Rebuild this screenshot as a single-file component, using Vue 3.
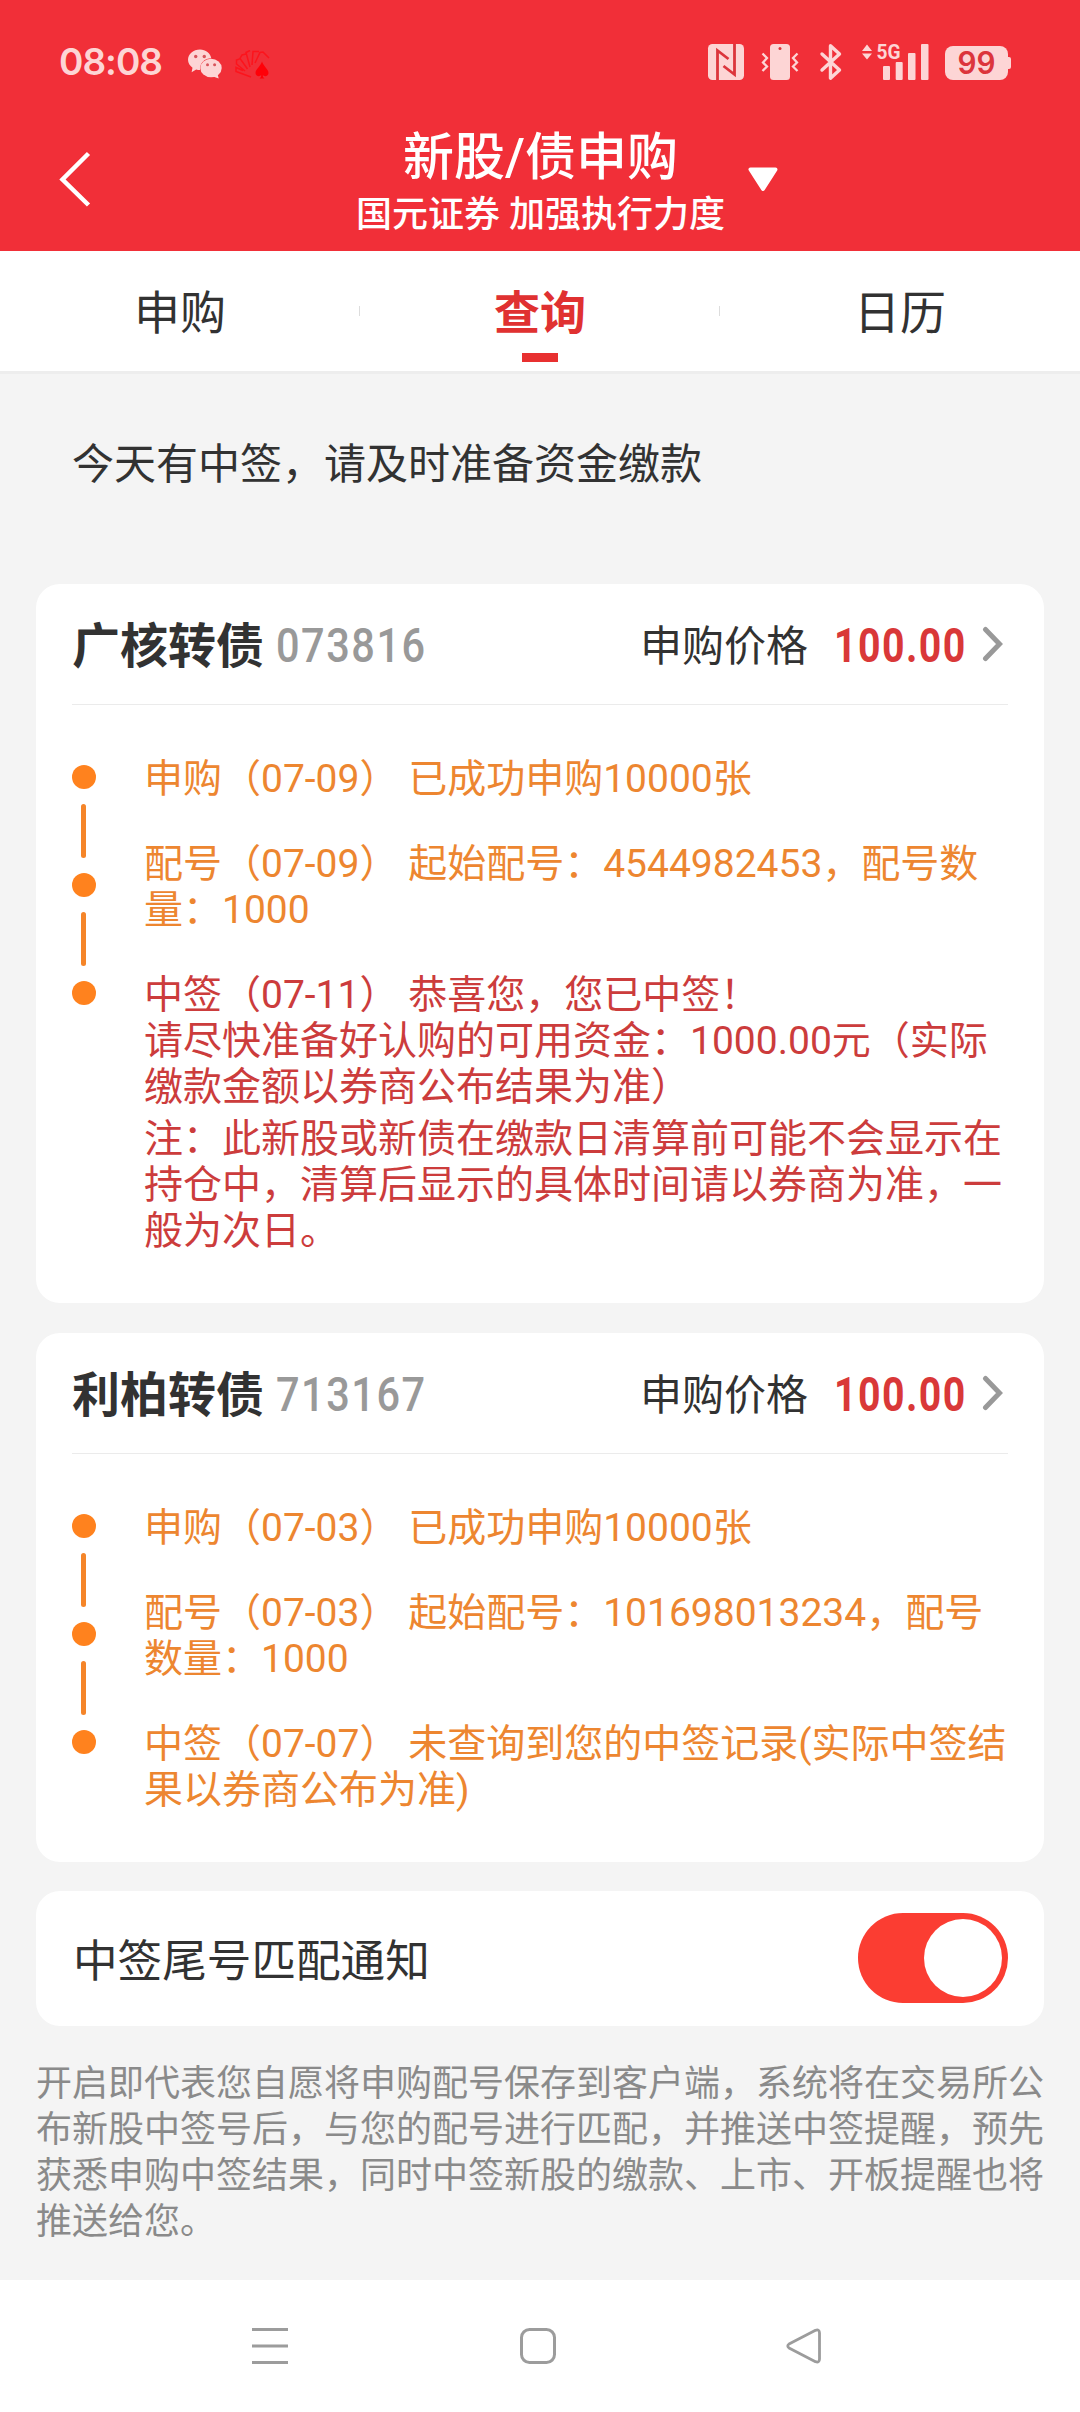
<script setup>
const tabs = [
  { label: '申购', active: false },
  { label: '查询', active: true },
  { label: '日历', active: false }
]

const bonds = [
  {
    name: '广核转债',
    code: '073816',
    price: '100.00',
    steps: [
      { text: '申购（07-09） 已成功申购10000张' },
      { text: '配号（07-09） 起始配号：4544982453，配号数\n量：1000' },
      {
        win: true,
        text: '中签（07-11） 恭喜您，您已中签！\n请尽快准备好认购的可用资金：1000.00元（实际\n缴款金额以券商公布结果为准）',
        note: '注：此新股或新债在缴款日清算前可能不会显示在\n持仓中，清算后显示的具体时间请以券商为准，一\n般为次日。'
      }
    ]
  },
  {
    name: '利柏转债',
    code: '713167',
    price: '100.00',
    steps: [
      { text: '申购（07-03） 已成功申购10000张' },
      { text: '配号（07-03） 起始配号：101698013234，配号\n数量：1000' },
      { text: '中签（07-07） 未查询到您的中签记录(实际中签结\n果以券商公布为准)' }
    ]
  }
]
</script>

<template>
  <div class="screen">
    <header class="header">
      <div class="status">
        <span class="clock">08:08</span>
        <svg class="wechat" width="34" height="30" viewBox="0 0 34 30">
          <path fill="#fdd5d5" d="M12 .5C5.4.5 0 5 0 10.800c0 3.300 1.800 6 4.500 7.900L3.600 23.200l4.600-2.600c1.300.4 2.300.5 3.800.5C11.300 14 17 9.300 23.300 9.300 22.500 4 17.600.5 12 .5z" />
          <ellipse cx="23" cy="19" rx="10.700" ry="9.300" fill="#fdd5d5" />
          <path fill="#fdd5d5" d="M25 27.500l5.700 2-1.200-4.800z" />
          <g fill="#d8545b">
            <circle cx="7.700" cy="7.500" r="1.700" /><circle cx="16.300" cy="7.500" r="1.700" />
            <circle cx="19.500" cy="15.800" r="1.500" /><circle cx="26.600" cy="15.800" r="1.500" />
          </g>
        </svg>
        <svg class="cards" width="36" height="30" viewBox="0 0 36 30">
          <g fill="none" stroke="#fc141c" stroke-width="1.500">
            <path d="M16 27L1 21.500v-4l7 3M10 21L1.500 14V10l3-1M12.500 19L5 8.500 7 5l4-1M15 17L11 2.500l4-2M17 15L18 1.500h6M20 13l5-10.500 3-.5 6 6" />
          </g>
          <path fill="#ff0008" d="M27 11.500c1.500 5 6.500 7.500 6.500 11.500 0 3-3.500 4-5.700 2.300l.2 1.700 1.500 1.500h-5l1.500-1.500.2-1.700c-2.200 1.700-5.700.7-5.700-2.300C20.500 19 25.500 16.500 27 11.500z" />
        </svg>
        <svg class="status-icons" width="310" height="44" viewBox="706 40 310 44">
          <g fill="#fdd5d5">
            <rect x="708" y="44" width="36" height="36" rx="4.500" />
            <rect x="770" y="44" width="20" height="36" rx="3.500" />
            <path d="M862 51h10l-5-6.500zM862 53.500h10l-5 6z" />
            <rect x="883" y="66" width="7" height="14" rx="1" />
            <rect x="895.700" y="62" width="7" height="18" rx="1" />
            <rect x="908" y="53" width="7.500" height="27" rx="1" />
            <rect x="921" y="44" width="7.500" height="36" rx="1" />
            <rect x="945" y="46" width="63" height="34" rx="8" />
            <path d="M1007 57h2a2 2 0 0 1 2 2v8a2 2 0 0 1-2 2h-2z" />
          </g>
          <g fill="none" stroke="#dc353c" stroke-width="2.800">
            <path d="M717.500 80V50.500l11 8.500M734.500 44v30.500L723.500 66" />
          </g>
          <circle cx="780" cy="48.500" r="1.500" fill="#dc353c" />
          <g fill="none" stroke="#fdd5d5">
            <path stroke-width="2.300" d="M762.500 53.500l4.500 4.500-4 4.500 4 4-4.500 4.500M797.500 53.500l-4.500 4.500 4 4.500-4 4 4.500 4.500" />
            <path stroke-width="3.400" stroke-linejoin="round" stroke-linecap="round" d="M822 54l17.500 16-9 8.200V45.800l9 8.200-17.500 16" />
          </g>
          <text x="876.500" y="59" class="net" textLength="24" lengthAdjust="spacingAndGlyphs">5G</text>
          <text x="976.500" y="74.300" class="level" text-anchor="middle" textLength="38" lengthAdjust="spacingAndGlyphs">99</text>
        </svg>
      </div>
      <div class="titlebar">
        <svg class="back" width="34" height="58" viewBox="0 0 34 58"><path d="M30.500 3.500L4.500 29.500l26 25.500" fill="none" stroke="#fff" stroke-width="4.500" /></svg>
        <div class="titles">
          <h1>新股/债申购</h1>
          <p>国元证券 加强执行力度</p>
        </div>
        <svg class="caret" width="30" height="25" viewBox="0 0 30 25"><path d="M2.500 2.500h25L15 22z" fill="#fff" stroke="#fff" stroke-width="4" stroke-linejoin="round" /></svg>
      </div>
    </header>

    <nav class="tabs">
      <div v-for="t in tabs" :key="t.label" class="tab" :class="{ active: t.active }">
        <span>{{ t.label }}</span>
      </div>
    </nav>

    <main class="content">
      <p class="notice">今天有中签，请及时准备资金缴款</p>

      <section v-for="b in bonds" :key="b.code" class="card">
        <div class="card-head">
          <strong class="name">{{ b.name }}</strong>
          <span class="code"><span class="narrow">{{ b.code }}</span></span>
          <span class="price-label">申购价格</span>
          <span class="price"><span class="narrow">{{ b.price }}</span></span>
          <svg class="chev" width="22" height="38" viewBox="0 0 22 38"><path d="M3.500 4.500L17.500 19l-14 14.500" fill="none" stroke="#999" stroke-width="5" stroke-linecap="round" /></svg>
        </div>
        <div class="card-body">
          <div class="rail">
            <i class="dot"></i><i class="bar"></i><i class="dot"></i><i class="bar"></i><i class="dot"></i>
          </div>
          <div class="steps">
            <div v-for="s in b.steps" :key="s.text" class="step" :class="{ win: s.win }">
              <p>{{ s.text }}</p>
              <p v-if="s.note" class="note">{{ s.note }}</p>
            </div>
          </div>
        </div>
      </section>

      <section class="card toggle">
        <span>中签尾号匹配通知</span>
        <div class="switch"><i></i></div>
      </section>

      <p class="footnote">开启即代表您自愿将申购配号保存到客户端，系统将在交易所公<br>布新股中签号后，与您的配号进行匹配，并推送中签提醒，预先<br>获悉申购中签结果，同时中签新股的缴款、上市、开板提醒也将<br>推送给您。</p>
    </main>

    <footer class="navbar">
      <svg width="36" height="36" viewBox="0 0 36 36"><path d="M0 1.500h36M0 18h36M0 34.500h36" stroke="#9c9c9c" stroke-width="3" /></svg>
      <svg class="home" width="36" height="36" viewBox="0 0 36 36"><rect x="1.500" y="1.500" width="33" height="33" rx="8" fill="none" stroke="#9c9c9c" stroke-width="3" /></svg>
      <svg width="36" height="36" viewBox="0 0 36 36"><path d="M3 16L29.500 2.300Q33.500 1 33.500 5v26q0 4-4 2.700L3 20Q.5 18 3 16z" fill="none" stroke="#9c9c9c" stroke-width="2.800" stroke-linejoin="round" /></svg>
    </footer>
  </div>
</template>

<style>
body {
  margin: 0;
  background: #f4f4f4;
}
</style>

<style scoped>
.screen {
  width: 1080px;
  height: 2412px;
  display: flex;
  flex-direction: column;
  overflow: hidden;
  background: #f4f4f4;
  color: #323232;
  font-family: Roboto, "Noto Sans CJK SC", sans-serif;
  text-spacing-trim: space-all;
}
p, h1 {
  margin: 0;
}
svg {
  display: block;
  flex: none;
}
.header {
  height: 251px;
  flex: none;
  background: #f12f38;
  color: #fff;
}
.status {
  height: 124px;
  display: flex;
  align-items: center;
  padding-left: 59px;
}
.clock {
  width: 129px;
  font: 600 37px/44px Inter, sans-serif;
  letter-spacing: -1px;
  color: #fdd5d5;
}
.wechat {
  margin-top: 3px;
}
.cards {
  margin: 5px 0 0 13px;
}
.status-icons {
  margin-left: auto;
  margin-right: 64px;
}
.net {
  font: 700 21px Roboto, sans-serif;
  fill: #fdd5d5;
}
.level {
  font: 600 31px Inter, sans-serif;
  fill: #dc353c;
}
.titlebar {
  height: 127px;
  display: grid;
  grid-template-columns: 355px 371px 1fr;
  align-items: start;
}
.back {
  margin: 26px 0 0 58px;
}
.titles {
  padding-top: 2px;
  text-align: center;
  white-space: nowrap;
}
h1 {
  font-size: 51px;
  line-height: 64px;
  font-weight: 500;
}
.titles p {
  font-size: 36px;
  line-height: 51px;
  font-weight: 500;
}
.caret {
  margin: 43px 0 0 22px;
}
.tabs {
  height: 120px;
  flex: none;
  display: flex;
  background: #fff;
  border-bottom: 3px solid #ededed;
}
.tab {
  flex: 1;
  position: relative;
  text-align: center;
  font-size: 46px;
  line-height: 125px;
}
.tab + .tab::before {
  content: "";
  position: absolute;
  left: -1px;
  top: 55px;
  width: 1px;
  height: 10px;
  background: #ddd;
}
.tab.active {
  color: #e03131;
  font-weight: 700;
}
.tab.active::after {
  content: "";
  position: absolute;
  left: 162px;
  top: 102px;
  width: 36px;
  height: 9px;
  background: #e83030;
}
.content {
  flex: 1;
  padding: 0 36px;
}
.notice {
  height: 210px;
  padding-left: 36px;
  font-size: 42px;
  line-height: 181px;
}
.card {
  background: #fff;
  border-radius: 24px;
  margin-bottom: 30px;
  padding: 0 36px;
}
.card-head {
  height: 120px;
  display: flex;
  align-items: center;
  border-bottom: 1px solid #ebebeb;
  white-space: nowrap;
}
.name {
  margin-top: 5px;
  font-size: 48px;
  line-height: 70px;
}
.code, .price {
  margin-top: 3px;
  font-size: 48.500px;
  line-height: 60px;
}
.code {
  width: 170px;
  margin-left: 12px;
  color: #999;
  font-weight: 500;
}
.narrow {
  display: inline-block;
  transform: scaleX(0.855);
  transform-origin: left;
  letter-spacing: 1.800px;
}
.price-label {
  margin-left: auto;
  margin-bottom: 3px;
  font-size: 42px;
}
.price {
  width: 148px;
  margin-left: 26px;
  color: #d93838;
  font-weight: 700;
}
.price .narrow {
  transform: scaleX(0.81);
}
.chev {
  margin-right: 4px;
}
.card-body {
  display: flex;
  padding: 51px 0 49px;
}
.rail {
  width: 72px;
  flex: none;
  padding-top: 9px;
}
.rail i {
  display: block;
}
.dot {
  width: 24px;
  height: 24px;
  border-radius: 50%;
  background: #ff821e;
}
.bar {
  width: 5px;
  height: 54px;
  margin: 15px 0 15px 9px;
  border-radius: 2.500px;
  background: #f58529;
}
.steps {
  display: flex;
  flex-direction: column;
  gap: 39px;
  font-size: 39px;
  line-height: 46px;
  color: #ed8630;
  white-space: pre;
}
.win {
  color: #cc3c3c;
}
.note {
  margin-top: 6px;
}
.toggle {
  height: 135px;
  margin-top: -1px;
  display: flex;
  align-items: center;
  justify-content: space-between;
  font-size: 44.600px;
}
.toggle span {
  margin: 0 0 2px 1px;
}
.switch {
  width: 150px;
  height: 90px;
  margin-bottom: 1px;
  box-sizing: border-box;
  padding: 6px;
  border-radius: 45px;
  background: #fb3d32;
  display: flex;
  justify-content: flex-end;
}
.switch i {
  width: 78px;
  height: 78px;
  border-radius: 50%;
  background: #fff;
}
.footnote {
  padding-top: 5px;
  font-size: 36px;
  line-height: 46px;
  color: #8a8a8a;
  white-space: nowrap;
}
.navbar {
  height: 132px;
  flex: none;
  display: flex;
  align-items: center;
  padding-left: 252px;
  box-sizing: border-box;
  background: #fff;
}
.home {
  margin: 0 230px 0 232px;
}
</style>
